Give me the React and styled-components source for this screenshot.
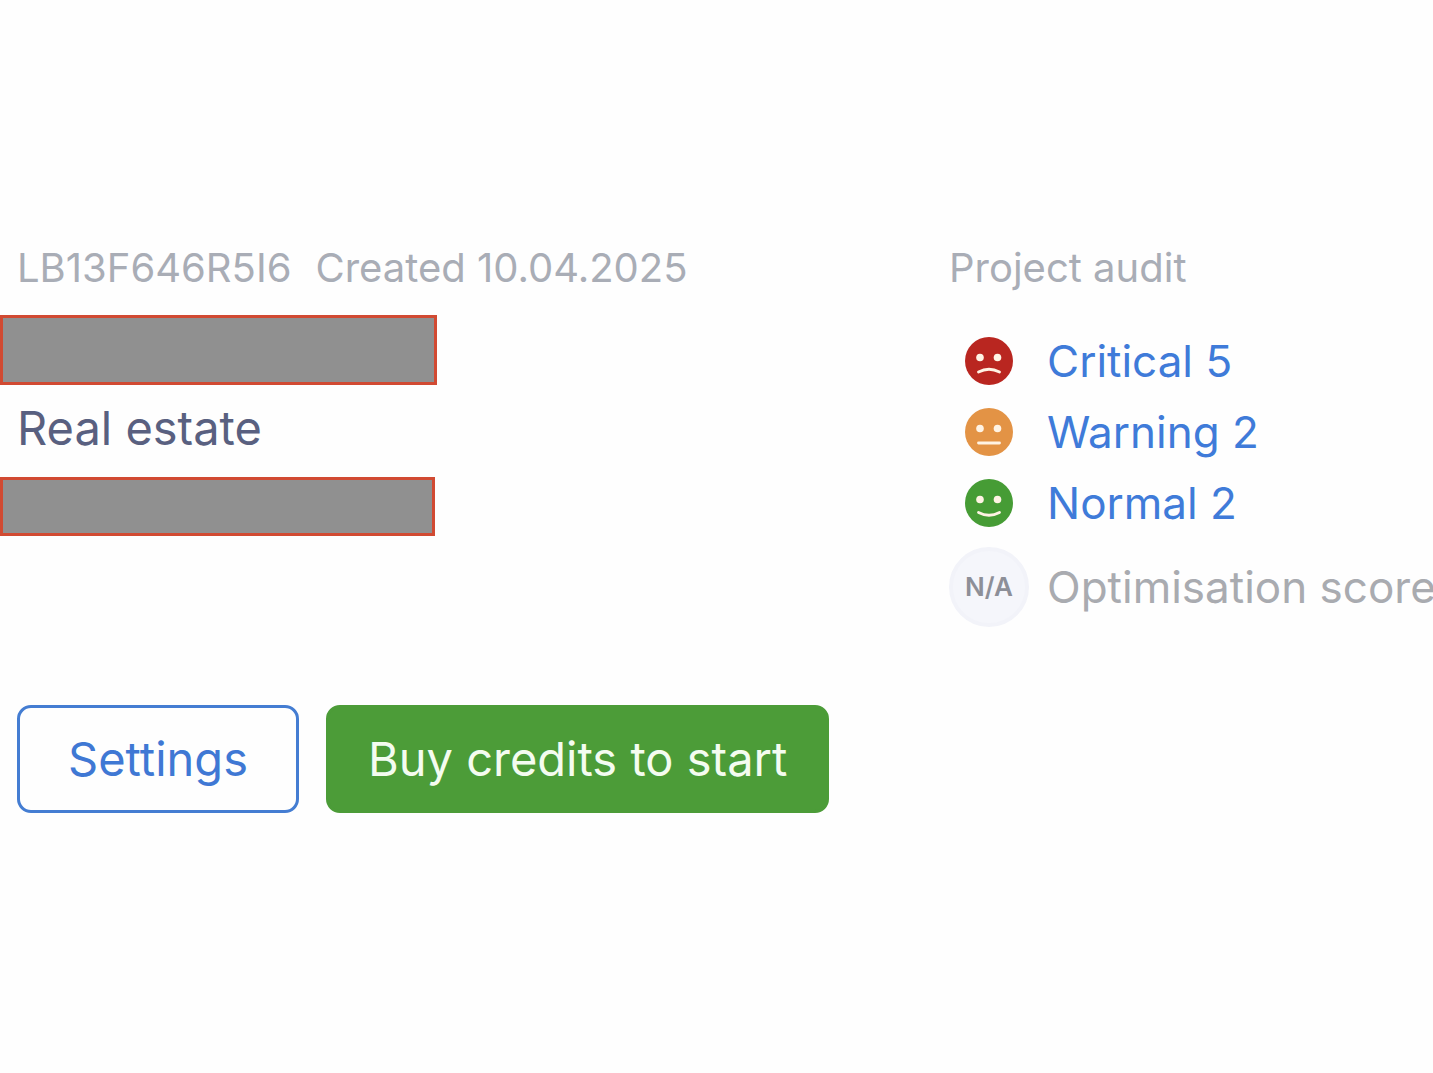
import React from 'react';
import styled, { createGlobalStyle } from 'styled-components';

const GlobalStyle = createGlobalStyle`
  * {
    box-sizing: border-box;
  }

  body {
    margin: 0;
    background: #fefefe;
    font-family: Inter, 'Liberation Sans', sans-serif;
    overflow-x: hidden;
  }
`;

// Project card: details on the left, audit on the right
const Card = styled.main`
  display: grid;
  grid-template-columns: minmax(0, 1fr) 484px;
  padding-top: 244px;
`;

const Details = styled.section`
  display: flex;
  flex-direction: column;
  align-items: flex-start;
`;

const Meta = styled.div`
  display: flex;
  gap: 24px;
  padding-left: 17px;
  color: #a9adb6;
  font-size: 40px;
  line-height: 48px;
`;

// Hidden project name / address
const Redacted = styled.div`
  width: ${({ $width }) => $width}px;
  height: ${({ $height }) => $height}px;
  margin-top: ${({ $top }) => $top}px;
  background: #909090;
  border: 3px solid #d14a32;
`;

const Category = styled.p`
  margin: 15px 0 0;
  padding-left: 17px;
  color: #596080;
  font-size: 47px;
  line-height: 56px;
`;

const Actions = styled.div`
  display: flex;
  gap: 27px;
  margin-top: 169px;
  padding-left: 17px;
`;

const Button = styled.button`
  height: 108px;
  padding: 0 ${({ $primary }) => ($primary ? 39 : 48)}px;
  background: ${({ $primary }) => ($primary ? '#4c9c38' : '#fefefe')};
  border: 3px solid ${({ $primary }) => ($primary ? '#4c9c38' : '#447dd2')};
  border-radius: 14px;
  color: ${({ $primary }) => ($primary ? '#f4fcf0' : '#3f78d4')};
  font-family: inherit;
  font-size: 47px;
  line-height: 56px;
  white-space: nowrap;
  cursor: pointer;
`;

const Audit = styled.section`
  display: flex;
  flex-direction: column;
`;

const AuditTitle = styled.h2`
  margin: 0 0 33px;
  color: #a9adb6;
  font-size: 40px;
  font-weight: 400;
  line-height: 48px;
`;

const AuditList = styled.ul`
  display: flex;
  flex-direction: column;
  margin: 0;
  padding: 0;
  list-style: none;
`;

const AuditRow = styled.li`
  display: grid;
  grid-template-columns: 80px max-content;
  align-items: center;
  column-gap: 18px;
  min-height: 71px;
  color: #a9abb0;
  font-size: 44px;
  line-height: 52px;

  svg {
    width: 48px;
    height: 48px;
    justify-self: center;
  }
`;

const ScoreRow = styled(AuditRow)`
  margin-top: 9px;
`;

const AuditLink = styled.a`
  color: #3f7bd9;
  text-decoration: none;

  &:hover {
    text-decoration: underline;
  }
`;

const Score = styled.span`
  display: flex;
  align-items: center;
  justify-content: center;
  width: 80px;
  height: 80px;
  background: #f5f6fb;
  border: 4px solid #f2f3f9;
  border-radius: 50%;
  color: #8d8f98;
  font-size: 26px;
  font-weight: 600;
  line-height: 32px;
`;

const Face = ({ color, mouth }) => (
  <svg viewBox="0 0 48 48" aria-hidden="true">
    <circle cx="24" cy="24" r="24" fill={color} />
    <circle cx="15" cy="20.5" r="3.8" fill="#fff3e4" />
    <circle cx="32.5" cy="20.5" r="3.8" fill="#fff3e4" />
    <path d={mouth} fill="none" stroke="#fff3e4" strokeWidth="2.8" strokeLinecap="round" />
  </svg>
);

const audits = [
  { label: 'Critical', count: 5, color: '#b92620', mouth: 'M13.5 35 Q24 29.5 34.5 35' },
  { label: 'Warning', count: 2, color: '#e39345', mouth: 'M13.5 35 H34.5' },
  { label: 'Normal', count: 2, color: '#469c35', mouth: 'M13.5 33.5 Q24 39 34.5 33.5' },
];

const App = () => (
  <>
    <GlobalStyle />
    <Card>
      <Details>
        <Meta>
          <span>LB13F646R5I6</span>
          <span>Created 10.04.2025</span>
        </Meta>
        <Redacted $width={437} $height={70} $top={23} />
        <Category>Real estate</Category>
        <Redacted $width={435} $height={59} $top={21} />
        <Actions>
          <Button type="button">Settings</Button>
          <Button type="button" $primary>
            Buy credits to start
          </Button>
        </Actions>
      </Details>
      <Audit>
        <AuditTitle>Project audit</AuditTitle>
        <AuditList>
          {audits.map(({ label, count, color, mouth }) => (
            <AuditRow key={label}>
              <Face color={color} mouth={mouth} />
              <AuditLink href="#">
                {label} {count}
              </AuditLink>
            </AuditRow>
          ))}
          <ScoreRow>
            <Score>N/A</Score>
            <span>Optimisation score</span>
          </ScoreRow>
        </AuditList>
      </Audit>
    </Card>
  </>
);

export default App;
